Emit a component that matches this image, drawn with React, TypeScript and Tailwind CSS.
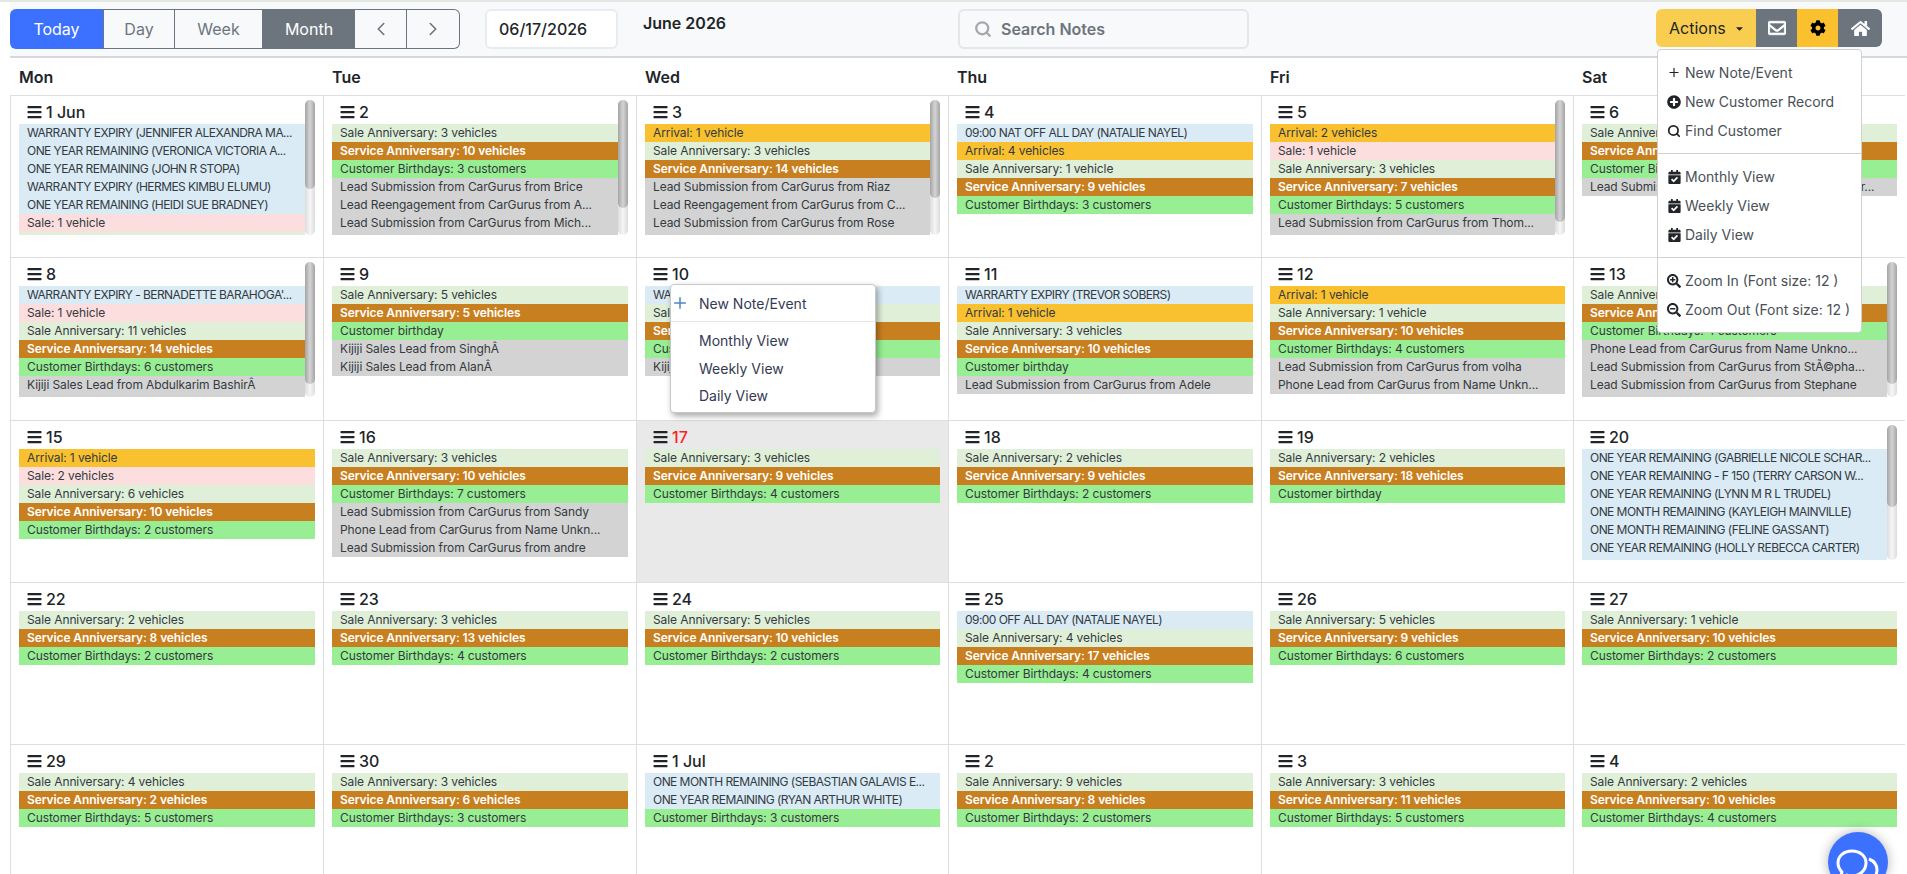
import { ChevronLeft, ChevronRight, Plus, Search } from "lucide-react";
import {
  FaBars,
  FaCalendarCheck,
  FaCaretDown,
  FaCog,
  FaHome,
  FaPlusCircle,
  FaRegEnvelope,
  FaSearchMinus,
  FaSearchPlus,
} from "react-icons/fa";

type Kind = "w" | "a" | "p" | "g" | "o" | "b" | "l";
type Ev = [Kind, string];

interface Day {
  label: string;
  today?: boolean;
  events: Ev[];
}

const kindClass: Record<Kind, string> = {
  w: "bg-[#daebf6] text-[#343a40] tracking-[-0.55px]",
  a: "bg-[#f9c02f] text-[#343a40] tracking-[-0.1px]",
  p: "bg-[#fcdede] text-[#343a40] tracking-[-0.1px]",
  g: "bg-[#e0efd8] text-[#343a40] tracking-[-0.1px]",
  o: "bg-[#c87f1f] text-white font-semibold tracking-[-0.1px]",
  b: "bg-[#98ee92] text-[#343a40] tracking-[-0.1px]",
  l: "bg-[#d3d3d3] text-[#343a40] tracking-[-0.1px]",
};

const sale = (n: number): Ev => ["g", `Sale Anniversary: ${n} ${n === 1 ? "vehicle" : "vehicles"}`];
const service = (n: number): Ev => ["o", `Service Anniversary: ${n} vehicles`];
const bdays = (n: number): Ev => ["b", `Customer Birthdays: ${n} customers`];
const oneBday: Ev = ["b", "Customer birthday"];
// rows under the fold, only there so the box keeps its real content height
const blank = (k: Kind, n: number): Ev[] => Array.from({ length: n }, () => [k, "\u00a0"] as Ev);

const days: Day[] = [
  {
    label: "1 Jun",
    events: [
      ["w", "WARRANTY EXPIRY (JENNIFER ALEXANDRA MA..."],
      ["w", "ONE YEAR REMAINING (VERONICA VICTORIA A..."],
      ["w", "ONE YEAR REMAINING (JOHN R STOPA)"],
      ["w", "WARRANTY EXPIRY (HERMES KIMBU ELUMU)"],
      ["w", "ONE YEAR REMAINING (HEIDI SUE BRADNEY)"],
      ["p", "Sale: 1 vehicle"],
      ...blank("g", 1),
      ...blank("o", 1),
      ...blank("b", 1),
      ...blank("l", 1),
    ],
  },
  {
    label: "2",
    events: [
      sale(3),
      service(10),
      bdays(3),
      ["l", "Lead Submission from CarGurus from Brice"],
      ["l", "Lead Reengagement from CarGurus from A..."],
      ["l", "Lead Submission from CarGurus from Mich..."],
      ...blank("l", 2),
    ],
  },
  {
    label: "3",
    events: [
      ["a", "Arrival: 1 vehicle"],
      sale(3),
      service(14),
      ["l", "Lead Submission from CarGurus from Riaz"],
      ["l", "Lead Reengagement from CarGurus from C..."],
      ["l", "Lead Submission from CarGurus from Rose"],
      ...blank("l", 3),
    ],
  },
  {
    label: "4",
    events: [
      ["w", "09:00 NAT OFF ALL DAY (NATALIE NAYEL)"],
      ["a", "Arrival: 4 vehicles"],
      sale(1),
      service(9),
      bdays(3),
    ],
  },
  {
    label: "5",
    events: [
      ["a", "Arrival: 2 vehicles"],
      ["p", "Sale: 1 vehicle"],
      sale(3),
      service(7),
      bdays(5),
      ["l", "Lead Submission from CarGurus from Thom..."],
      ...blank("l", 1),
    ],
  },
  {
    label: "6",
    events: [
      sale(3),
      service(10),
      bdays(3),
      ["l", "Lead Submission from CarGurus from Name Impr..."],
    ],
  },
  {
    label: "8",
    events: [
      ["w", "WARRANTY EXPIRY - BERNADETTE BARAHOGA'..."],
      ["p", "Sale: 1 vehicle"],
      sale(11),
      service(14),
      bdays(6),
      ["l", "Kijiji Sales Lead from Abdulkarim BashirÂ"],
      ...blank("l", 1),
    ],
  },
  {
    label: "9",
    events: [
      sale(5),
      service(5),
      oneBday,
      ["l", "Kijiji Sales Lead from SinghÂ"],
      ["l", "Kijiji Sales Lead from AlanÂ"],
    ],
  },
  {
    label: "10",
    events: [
      ["w", "WARRANTY EXPIRY (NAME NOT SHOWN)"],
      sale(3),
      service(10),
      bdays(3),
      ["l", "Kijiji Sales Lead"],
    ],
  },
  {
    label: "11",
    events: [
      ["w", "WARRARTY EXPIRY (TREVOR SOBERS)"],
      ["a", "Arrival: 1 vehicle"],
      sale(3),
      service(10),
      oneBday,
      ["l", "Lead Submission from CarGurus from Adele"],
    ],
  },
  {
    label: "12",
    events: [
      ["a", "Arrival: 1 vehicle"],
      sale(1),
      service(10),
      bdays(4),
      ["l", "Lead Submission from CarGurus from volha"],
      ["l", "Phone Lead from CarGurus from Name Unkn..."],
    ],
  },
  {
    label: "13",
    events: [
      sale(3),
      service(10),
      bdays(4),
      ["l", "Phone Lead from CarGurus from Name Unkno..."],
      ["l", "Lead Submission from CarGurus from StÃ©pha..."],
      ["l", "Lead Submission from CarGurus from Stephane"],
      ...blank("l", 1),
    ],
  },
  {
    label: "15",
    events: [
      ["a", "Arrival: 1 vehicle"],
      ["p", "Sale: 2 vehicles"],
      sale(6),
      service(10),
      bdays(2),
    ],
  },
  {
    label: "16",
    events: [
      sale(3),
      service(10),
      bdays(7),
      ["l", "Lead Submission from CarGurus from Sandy"],
      ["l", "Phone Lead from CarGurus from Name Unkn..."],
      ["l", "Lead Submission from CarGurus from andre"],
    ],
  },
  { label: "17", today: true, events: [sale(3), service(9), bdays(4)] },
  { label: "18", events: [sale(2), service(9), bdays(2)] },
  { label: "19", events: [sale(2), service(18), oneBday] },
  {
    label: "20",
    events: [
      ["w", "ONE YEAR REMAINING (GABRIELLE NICOLE SCHAR..."],
      ["w", "ONE YEAR REMAINING - F 150 (TERRY CARSON W..."],
      ["w", "ONE YEAR REMAINING (LYNN M R L TRUDEL)"],
      ["w", "ONE MONTH REMAINING (KAYLEIGH MAINVILLE)"],
      ["w", "ONE MONTH REMAINING (FELINE GASSANT)"],
      ["w", "ONE YEAR REMAINING (HOLLY REBECCA CARTER)"],
      ...blank("w", 5),
    ],
  },
  { label: "22", events: [sale(2), service(8), bdays(2)] },
  { label: "23", events: [sale(3), service(13), bdays(4)] },
  { label: "24", events: [sale(5), service(10), bdays(2)] },
  {
    label: "25",
    events: [["w", "09:00 OFF ALL DAY (NATALIE NAYEL)"], sale(4), service(17), bdays(4)],
  },
  { label: "26", events: [sale(5), service(9), bdays(6)] },
  { label: "27", events: [sale(1), service(10), bdays(2)] },
  { label: "29", events: [sale(4), service(2), bdays(5)] },
  { label: "30", events: [sale(3), service(6), bdays(3)] },
  {
    label: "1 Jul",
    events: [
      ["w", "ONE MONTH REMAINING (SEBASTIAN GALAVIS E..."],
      ["w", "ONE YEAR REMAINING (RYAN ARTHUR WHITE)"],
      bdays(3),
    ],
  },
  { label: "2", events: [sale(9), service(8), bdays(2)] },
  { label: "3", events: [sale(3), service(11), bdays(5)] },
  { label: "4", events: [sale(2), service(10), bdays(4)] },
];

const weekdays = ["Mon", "Tue", "Wed", "Thu", "Fri", "Sat"];

const BOX_H = 135;

const DayCell = ({ day }: { day: Day }) => {
  const contentH = 24 + day.events.length * 18;
  const scrolls = contentH > BOX_H;

  return (
    <div
      className={`border-l border-t border-[#dedede] pl-[8px] pr-[8px] pt-[4px] overflow-hidden ${
        day.today ? "bg-[#e9e9e9]" : "bg-white"
      }`}
    >
      <div className="h-[135px] flex">
        <div className="flex-1 min-w-0 overflow-hidden">
          <div className="h-[24px] pl-[8px] flex items-center gap-[4px] text-[16px] font-medium text-[#212529]">
            <FaBars className="w-[15px] h-[16px] shrink-0" />
            <span className={day.today ? "text-[#fb1f1f]" : ""}>{day.label}</span>
          </div>
          {day.events.map((ev, i) => (
            <div key={i} className={`h-[18px] px-[8px] text-[12px] leading-[18px] truncate ${kindClass[ev[0]]}`}>
              {ev[1]}
            </div>
          ))}
        </div>
        {scrolls && (
          <div className="w-[10px] shrink-0 rounded-full bg-[linear-gradient(90deg,#dcdcdc,#f6f6f6,#dcdcdc)]">
            <div
              className="rounded-full bg-[linear-gradient(90deg,#a4a4a4,#d4d4d4,#a4a4a4)]"
              style={{ height: (BOX_H * BOX_H) / contentH }}
            />
          </div>
        )}
      </div>
    </div>
  );
};

const ActionItem = ({ icon, text }: { icon: React.ReactNode; text: string }) => (
  <div className="h-[29px] pl-[9px] flex items-center gap-[4px] text-[14px] text-[#495057] whitespace-nowrap">
    <span className="w-[14px] flex justify-center text-[#212529]">{icon}</span>
    {text}
  </div>
);

export default function App() {
  return (
    <div className="relative h-[874px] overflow-hidden bg-white border-t-2 border-[#e5e7e2] font-['Inter',sans-serif] text-[#212529]">
      {/* toolbar */}
      <div className="ml-[10px] h-[56px] pt-[7px] flex items-start bg-[#f8f9fa] border-b-2 border-[#d5d7da]">
        <div className="flex h-[40px] text-[16px] text-[#6c757d] rounded-[6px]">
          <div className="w-[93px] flex items-center justify-center bg-[#3b71fe] text-white rounded-l-[6px]">Today</div>
          <div className="w-[72px] flex items-center justify-center border border-[#6c757d]">Day</div>
          <div className="w-[88px] flex items-center justify-center border-y border-r border-[#6c757d]">Week</div>
          <div className="w-[92px] flex items-center justify-center bg-[#6c757d] text-white">Month</div>
          <div className="w-[52px] flex items-center justify-center border-y border-r border-[#6c757d]">
            <ChevronLeft className="w-[22px] h-[22px]" strokeWidth={1.75} />
          </div>
          <div className="w-[53px] flex items-center justify-center border-y border-r border-[#6c757d] rounded-r-[6px]">
            <ChevronRight className="w-[22px] h-[22px]" strokeWidth={1.75} />
          </div>
        </div>
        <div className="ml-[25px] w-[133px] h-[40px] pl-[12px] flex items-center bg-white border-2 border-[#e9ecef] rounded-[6px] text-[16px] font-medium text-[#212529]">
          06/17/2026
        </div>
        <div className="ml-[25px] mt-[4px] text-[16px] font-semibold leading-[20px]">June 2026</div>
        <div className="ml-[232px] w-[291px] h-[40px] pl-[14px] flex items-center gap-[9px] bg-[#f8f9fa] border-2 border-[#e4e6ea] rounded-[6px] text-[16px] font-semibold text-[#6c757d]">
          <Search className="w-[18px] h-[18px] text-[#a4a7ab]" strokeWidth={3} />
          Search Notes
        </div>
        <div className="ml-auto mr-[25px] flex h-[38px] text-[16px]">
          <div className="w-[100px] pl-[13px] flex items-center gap-[8px] bg-[#f9cd50] rounded-l-[6px]">
            Actions
            <FaCaretDown className="w-[11px] h-[11px]" />
          </div>
          <div className="w-[41px] flex items-center justify-center bg-[#6c757d] text-white">
            <FaRegEnvelope className="w-[18px] h-[18px]" stroke="currentColor" strokeWidth={20} />
          </div>
          <div className="w-[41px] flex items-center justify-center bg-[#fbc02d] text-black">
            <FaCog className="w-[16px] h-[16px]" />
          </div>
          <div className="w-[44px] flex items-center justify-center bg-[#6c757d] text-white rounded-r-[6px]">
            <FaHome className="w-[19px] h-[19px]" />
          </div>
        </div>
      </div>

      {/* calendar */}
      <div className="ml-[10px] mr-[2px]">
        <div className="h-[37px] grid grid-cols-[313px_313px_312px_313px_312px_332px] items-center text-[16px] font-semibold">
          {weekdays.map((d) => (
            <div key={d} className="pl-[9px]">
              {d}
            </div>
          ))}
        </div>
        <div className="grid grid-cols-[313px_313px_312px_313px_312px_332px] auto-rows-[162.25px] border-r border-[#dedede]">
          {days.map((day, i) => (
            <DayCell key={i} day={day} />
          ))}
        </div>
      </div>

      {/* day context menu */}
      <div className="absolute left-[670px] top-[282px] w-[206px] h-[129px] bg-white rounded-[4px] border border-[#c8c8c8] shadow-[2px_3px_6px_rgba(0,0,0,0.35)] text-[14px] text-[#343a52]">
        <div className="h-[36px] pl-[28px] flex items-center relative">
          <Plus className="absolute left-[0px] w-[18px] h-[18px] text-[#4a86c5]" strokeWidth={2} />
          New Note/Event
        </div>
        <div className="border-t border-[#e5e5e5] pt-[5px]">
          <div className="h-[27.5px] pl-[28px] flex items-center">Monthly View</div>
          <div className="h-[27.5px] pl-[28px] flex items-center">Weekly View</div>
          <div className="h-[27.5px] pl-[28px] flex items-center">Daily View</div>
        </div>
      </div>

      {/* actions dropdown */}
      <div className="absolute left-[1657px] top-[47px] w-[205px] h-[284px] bg-white rounded-[4px] border border-[#d0d0d0]">
        <div className="pt-[8px]">
          <ActionItem icon={<Plus className="w-[15px] h-[15px]" strokeWidth={2} />} text="New Note/Event" />
          <ActionItem icon={<FaPlusCircle className="w-[14px] h-[14px]" />} text="New Customer Record" />
          <ActionItem icon={<Search className="w-[14px] h-[14px]" strokeWidth={3} />} text="Find Customer" />
        </div>
        <div className="mt-[8px] pt-[8px] border-t border-[#d0d0d0]">
          <ActionItem icon={<FaCalendarCheck className="w-[13px] h-[14px]" />} text="Monthly View" />
          <ActionItem icon={<FaCalendarCheck className="w-[13px] h-[14px]" />} text="Weekly View" />
          <ActionItem icon={<FaCalendarCheck className="w-[13px] h-[14px]" />} text="Daily View" />
        </div>
        <div className="mt-[8px] pt-[8px] border-t border-[#d0d0d0]">
          <ActionItem icon={<FaSearchPlus className="w-[14px] h-[14px]" />} text="Zoom In (Font size: 12 )" />
          <ActionItem icon={<FaSearchMinus className="w-[14px] h-[14px]" />} text="Zoom Out (Font size: 12 )" />
        </div>
      </div>

      {/* chat bubble */}
      <div className="absolute left-[1828px] top-[830px] w-[60px] h-[60px] rounded-full bg-[#3b71fe] shadow-[0_0_12px_rgba(0,0,0,0.3)] flex items-start justify-center pt-[17px]">
        <svg width="44" height="36" viewBox="0 0 44 36" fill="none" stroke="white" strokeWidth="3" strokeLinejoin="round">
          <path d="M16 2C8 2 2 7 2 14c0 4 2 7 4 9l-2 6 7-3c2 1 3 1 5 1 8 0 14-6 14-13S24 2 16 2z" />
          <path d="M33 10c5 2 8 6 8 11 0 3-1 5-2 7l1 6-6-3c-2 1-4 2-7 2-3 0-6-1-8-3" />
        </svg>
      </div>
    </div>
  );
}
